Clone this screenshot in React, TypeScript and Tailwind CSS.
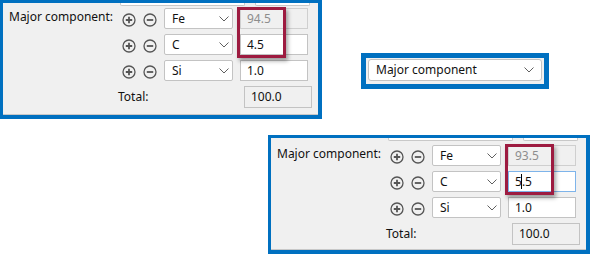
import React from 'react';

type Row = { el: string; value: string; disabled?: boolean; focused?: boolean };

const FONT = { fontFamily: '"Noto Sans", "Open Sans", Arial, sans-serif' };

function CirclePlus() {
  return (
    <svg width="14" height="14" viewBox="0 0 14 14" className="shrink-0">
      <circle cx="7" cy="7" r="6" fill="none" stroke="#555" strokeWidth="1.3" />
      <path d="M7 3.8v6.4M3.8 7h6.4" stroke="#555" strokeWidth="1.8" />
    </svg>
  );
}

function CircleMinus() {
  return (
    <svg width="14" height="14" viewBox="0 0 14 14" className="shrink-0">
      <circle cx="7" cy="7" r="6" fill="none" stroke="#555" strokeWidth="1.3" />
      <path d="M3.8 7h6.4" stroke="#555" strokeWidth="1.8" />
    </svg>
  );
}

function Chevron() {
  return (
    <svg width="10" height="6" viewBox="0 0 10 6" className="shrink-0">
      <path d="M0.5 0.5L5 5L9.5 0.5" fill="none" stroke="#606060" strokeWidth="1" />
    </svg>
  );
}

function Select({ label, className }: { label: string; className: string }) {
  return (
    <div className={`flex items-center justify-between rounded-[2px] border border-[#c3c3c3] bg-white pl-[7px] pr-[3px] text-[12px] text-[#111] ${className}`}>
      <span>{label}</span>
      <Chevron />
    </div>
  );
}

function ValueField({ row }: { row: Row }) {
  if (row.disabled) {
    return (
      <div className="flex h-[21px] w-[68px] items-center border border-[#cfcfcf] bg-[#f0f0f0] pl-[6px] text-[12px] text-[#8d8d8d]">
        {row.value}
      </div>
    );
  }
  if (row.focused) {
    const [a, b] = [row.value.slice(0, 1), row.value.slice(1)];
    return (
      <div className="flex h-[21px] w-[68px] items-center border border-[#7eb4ea] bg-white pl-[6px] text-[12px] text-[#111]">
        {a}
        <span className="relative">
          <span className="absolute left-[-0.5px] top-[1px] h-[15px] w-px bg-black" />
          {b}
        </span>
      </div>
    );
  }
  return (
    <div className="flex h-[21px] w-[68px] items-center border border-[#c3c3c3] bg-white pl-[6px] text-[12px] text-[#111]">
      {row.value}
    </div>
  );
}

function Panel({ rows, total, extraTop = 0 }: { rows: Row[]; total: string; extraTop?: number }) {
  return (
    <div
      className="relative flex h-[119px] w-[322px] shrink-0 flex-col border-[3px] border-r-4 border-b-4 border-[#0070c0] bg-[#f0f0f0]"
      style={FONT}
    >
      {/* bottoms of the controls in the row above */}
      <div className="flex h-[3px] shrink-0">
        <div className="ml-[117px] w-[125px] rounded-b-[2px] border-x border-b border-[#c8c8c8] bg-white" />
        <div className="ml-[10px] w-[55px] rounded-b-[2px] border-x border-b border-[#c8c8c8] bg-white" />
      </div>

      <div className="flex flex-col gap-[5px] pl-[6px]" style={{ paddingTop: 2 + extraTop }}>
        {rows.map((row, i) => (
          <div key={row.el} className="flex h-[21px] items-center">
            <div className="w-[113px] self-start pt-[1px] text-[12px] leading-[16px] text-[#111]">
              {i === 0 ? 'Major component:' : ''}
            </div>
            <div className="mt-[2px] flex items-center gap-[7px]">
              <CirclePlus />
              <CircleMinus />
            </div>
            <Select label={row.el} className="ml-[7px] h-[21px] w-[69px]" />
            <div className="ml-[7px]">
              <ValueField row={row} />
            </div>
          </div>
        ))}
        <div className="flex h-[22px] items-center">
          <div className="w-[235px] pl-[109px] text-[12px] text-[#111]">Total:</div>
          <div className="flex h-[22px] w-[68px] items-center border border-[#c3c3c3] bg-[#f0f0f0] pl-[6px] text-[12px] text-[#111]">
            {total}
          </div>
        </div>
      </div>

      <div className="mt-auto h-px shrink-0 bg-[#c8c8c8]" />

      {/* highlight */}
      <div
        className="absolute left-[234px] h-[51px] w-[49px] border-[3px] border-[#9d1b40] shadow-[2px_3px_4px_rgba(0,0,0,0.35)]"
        style={{ top: 4 + extraTop }}
      />
    </div>
  );
}

export default function App() {
  return (
    <div className="h-[254px] w-[590px] overflow-hidden bg-white" style={FONT}>
      <div className="flex items-start">
        <Panel
          rows={[
            { el: 'Fe', value: '94.5', disabled: true },
            { el: 'C', value: '4.5' },
            { el: 'Si', value: '1.0' },
          ]}
          total="100.0"
        />
        <div className="ml-[39px] mt-[53px] h-[36px] w-[188px] border-[5px] border-[#0070c0] bg-[#f0f0f0] pl-[2px] pt-[1px]">
          <div className="flex h-[22px] w-[174px] items-center justify-between rounded-[3px] border border-[#c3c3c3] bg-white pl-[7px] pr-[7px] text-[12px] text-[#111]">
            <span>Major component</span>
            <Chevron />
          </div>
        </div>
      </div>

      <div className="ml-[268px] mt-[16px]">
        <Panel
          rows={[
            { el: 'Fe', value: '93.5', disabled: true },
            { el: 'C', value: '5.5', focused: true },
            { el: 'Si', value: '1.0' },
          ]}
          total="100.0"
          extraTop={2}
        />
      </div>
    </div>
  );
}
